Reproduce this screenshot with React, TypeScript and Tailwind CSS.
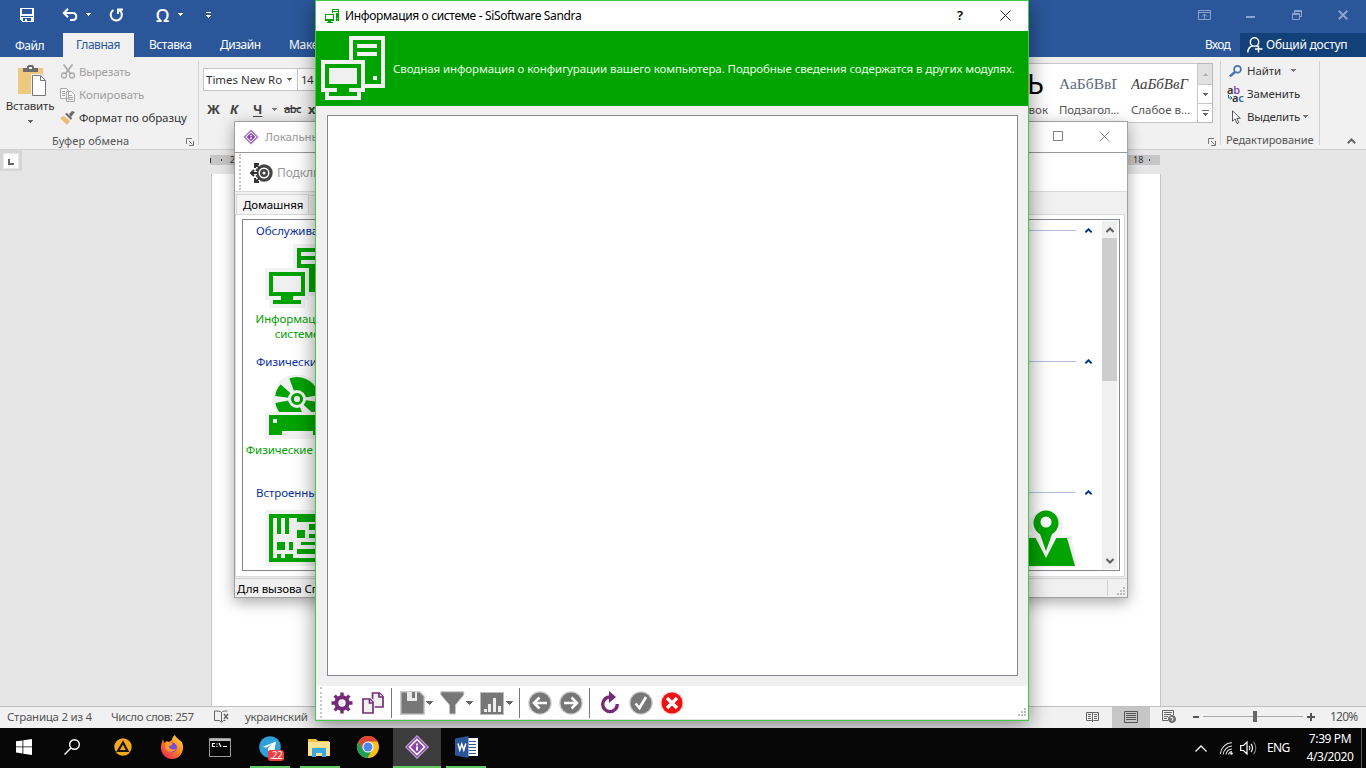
import React from 'react';
import type { ReactNode } from 'react';

function Caret({ className = '' }: { className?: string }) {
  return (
    <svg className={`shrink-0 ${className}`} width="5" height="3" viewBox="0 0 5 3" fill="currentColor" shapeRendering="crispEdges">
      <path d="M0 0h5v1H4v1H3v1H2V2H1V1H0z" />
    </svg>
  );
}

function WideCaret({ className = '' }: { className?: string }) {
  return (
    <svg className={`shrink-0 ${className}`} width="7" height="4" viewBox="0 0 7 4" fill="currentColor" shapeRendering="crispEdges">
      <path d="M0 0h7v1H6v1H5v1H4v1H3V3H2V2H1V1H0z" />
    </svg>
  );
}

function Launcher({ className = '' }: { className?: string }) {
  return (
    <svg className={`shrink-0 ${className}`} width="8" height="8" viewBox="0 0 8 8" stroke="#777" fill="none">
      <path d="M.5 6V.5H6M3 3l3.500 3.500M7.500 3v4.500H3" />
    </svg>
  );
}

function Computers({ size, light, className = '' }: { size: number; light: string; className?: string }) {
  return (
    <svg className={`shrink-0 ${className}`} width={size} height={size} viewBox="0 0 16 16" shapeRendering="crispEdges">
      <path fill={light} d="M7 0h9v13h-5v1h-1v2H1v-2H0V6h7z" />
      <path fill="#00a300" d="M8 1h7v11h-4V6H8z" />
      <path fill={light} d="M9 2h5v1H9zM9 4h5v1H9zM13 10h1v1h-1z" />
      <path fill="#00a300" d="M1 7h9v6H7v1h2v1H2v-1h2v-1H1z" />
      <path fill="#f0f0f0" d="M2 8h7v4H2z" />
    </svg>
  );
}

function SmallComputers() {
  return (
    <svg className="shrink-0" width="16" height="16" viewBox="0 0 16 16" shapeRendering="crispEdges">
      <path fill="#00a300" d="M7 1h7v12h-3V5H7z" />
      <path fill="#fff" d="M8 2h5v1H8zM8 4h5v1H8zM12 10h1v1h-1z" />
      <path fill="#00a300" d="M0 6h9v7H6v1h2v1H2v-1h1v-1H0z" />
      <path fill="#fff" d="M1 7h7v4H1z" />
    </svg>
  );
}

function Diamond({ size, halo }: { size: number; halo: string }) {
  return (
    <svg className="shrink-0" width={size} height={size} viewBox="0 0 24 24">
      <path fill={halo} d="M12 0l12 12-12 12L0 12z" />
      <path fill="#8b44ac" d="M12 1.500L22.500 12 12 22.500 1.500 12z" />
      <path fill="#fff" d="M12 3.300L20.700 12 12 20.700 3.300 12z" />
      <path fill="#8b44ac" d="M12 5.500L18.500 12 12 18.500 5.500 12z" />
      <path fill="#fff" d="M11 8.500h2v2h-2zM11 11.500h2v4h-2z" />
    </svg>
  );
}

function TitleBar() {
  return (
    <div className="flex h-[33px] shrink-0 items-start bg-[#2b579a] text-white">
      <svg className="ml-[20px] mt-[8px]" width="14" height="14" viewBox="0 0 14 14" shapeRendering="crispEdges">
        <path fill="#fff" d="M0 0h14v14H2l-2-2z" />
        <path fill="#2b579a" d="M2 1h10v5H2zM1 8h12v1H1zM3 9h8v4H3z" />
        <path fill="#fff" d="M3 9h8v1H3zM5 11h2v3H5z" />
      </svg>
      <svg className="ml-[28px] mt-[8px]" width="16" height="13" viewBox="0 0 16 13" fill="none" stroke="#fff" strokeWidth="2">
        <path d="M6 .8L1.800 5 6 9.200M2 5h8.500c5 0 5 7 0 7H8" />
      </svg>
      <Caret className="ml-[8px] mt-[13px]" />
      <svg className="ml-[18px] mt-[8px]" width="15" height="14" viewBox="0 0 15 14" fill="none" stroke="#fff" strokeWidth="2">
        <path d="M4.500 2A5.600 5.600 0 1 0 10.500 2.300M9 6V1.400h5" />
      </svg>
      <span className="ml-[32px] mt-[4px] w-[17px] font-['Noto_Sans'] text-[18px] font-medium leading-[22px]">Ω</span>
      <Caret className="ml-[5px] mt-[13px]" />
      <svg className="ml-[23px] mt-[12px]" width="5" height="7" viewBox="0 0 5 7" fill="#fff" shapeRendering="crispEdges">
        <path d="M0 0h5v1H0zM0 3h5v1H4v1H3v1H2V5H1V4H0z" />
      </svg>
      <div className="flex-1" />
      <div className="flex items-start pt-[10px] text-[#8aa4cc]">
        <svg width="13" height="10" viewBox="0 0 13 10" fill="none" stroke="currentColor">
          <path d="M.5.5h12v9H.5zM1 2.500h11M6.500 9V4M4 6.500L6.500 4 9 6.500" />
        </svg>
        <div className="ml-[35px] mt-[6px] h-[2px] w-[9px] bg-[#8aa4cc]" />
        <svg className="ml-[37px]" width="10" height="10" viewBox="0 0 10 10" fill="none" stroke="currentColor">
          <path d="M.5 3.500h7v6h-7zM.5 4.500h7M2.500 3V.5h7v6H8M2.500 1.500h7" />
        </svg>
        <svg className="ml-[36px] mr-[18px]" width="10" height="10" viewBox="0 0 10 10" stroke="currentColor" strokeWidth="2">
          <path d="M.7.7l8.600 8.600M9.300.7L.7 9.300" />
        </svg>
      </div>
    </div>
  );
}

function TabRow() {
  return (
    <div className="flex h-[24px] shrink-0 bg-[#2b579a] text-[12px] leading-[24px] text-white">
      <span className="w-[63px] pl-[15px] pt-px tracking-[-0.5px]">Файл</span>
      <span className="w-[71px] bg-[#f1f1f1] pl-[13px] tracking-[-0.45px] text-[#2b579a]">Главная</span>
      <span className="ml-[15px] w-[71px] tracking-[-0.45px]">Вставка</span>
      <span className="w-[69px] tracking-[-0.5px]">Дизайн</span>
      <span className="tracking-[-0.3px]">Макет</span>
      <div className="flex-1" />
      <span className="w-[35px] tracking-[-0.7px]">Вход</span>
      <div className="flex w-[126px] items-center bg-[#124078] pl-[7px]">
        <svg width="16" height="16" viewBox="0 0 16 16" fill="none" stroke="#fff" strokeWidth="1.4">
          <circle cx="7.500" cy="5" r="4.200" />
          <path d="M.8 15.500c0-4 2-6 5-6.800M9.500 9l1 .8M11.500 8.500v7M8 12h7.500" />
        </svg>
        <span className="ml-[3px] tracking-[-0.25px]">Общий доступ</span>
      </div>
    </div>
  );
}

function ClipboardGroup() {
  return (
    <div className="flex w-[198px] shrink-0 flex-col">
      <div className="flex h-[74px]">
        <div className="flex w-[60px] flex-col items-center">
          <svg className="ml-[4px] mt-[8px]" width="30" height="31" viewBox="0 0 30 31">
            <path fill="#edc87e" d="M1 3h25v26H1z" />
            <path fill="#6b6b6b" d="M6 3h4V1.500L11.500 0h4L17 1.500V3h4v4H6z" />
            <path fill="#f1f1f1" d="M12 2h3v2h-3z" />
            <path fill="#fff" stroke="#f1f1f1" strokeWidth="3" d="M15.500 10.500h8l5 5v15h-13z" />
            <path fill="#fff" stroke="#777" d="M15.500 10.500h8l5 5v15h-13z" />
            <path fill="none" stroke="#777" d="M23.500 10.500v5h5" />
          </svg>
          <span className="mt-px text-[11.500px] leading-[18px] tracking-[-0.2px] text-[#333]">Вставить</span>
          <Caret className="mt-[5px] text-[#666]" />
        </div>
        <div className="flex flex-col pt-[3px] text-[11.500px] leading-[23px] tracking-[-0.08px] text-[#a0a0a0]">
          <div className="flex h-[23px] items-center">
            <svg width="16" height="15" viewBox="0 0 16 15" fill="none" stroke="#a8a8a8" strokeWidth="1.300">
              <circle cx="4" cy="11.500" r="2.500" />
              <circle cx="12" cy="11.500" r="2.500" />
              <path d="M3.500.5l7 9M12.500.5l-7 9" strokeWidth="1.700" />
            </svg>
            <span className="ml-[3px] tracking-[-0.2px]">Вырезать</span>
          </div>
          <div className="flex h-[23px] items-center">
            <svg width="16" height="14" viewBox="0 0 16 14" fill="#f5f5f5" stroke="#a8a8a8">
              <path d="M.5.5h6l2 2v8h-8zM6.500 3.500h5l3 3v7h-8z" />
              <path d="M2 3.500h3M2 5.500h3M2 7.500h3M8 7.500h4M8 9.500h5M8 11.500h5" />
            </svg>
            <span className="ml-[3px]">Копировать</span>
          </div>
          <div className="flex h-[23px] items-center text-[#333]">
            <svg width="16" height="14" viewBox="0 0 16 14">
              <path fill="#e9bd76" d="M0 7l4-2 6 5-3 4z" />
              <path fill="#6b6b6b" d="M5 3l2-1 5 5-1 2zM9 3l3-3 3 1-4 5z" />
            </svg>
            <span className="ml-[3px]">Формат по образцу</span>
          </div>
        </div>
      </div>
      <div className="flex h-[18px] items-center pt-[2px] text-[11px] text-[#555]">
        <span className="ml-[52px] w-[134px] tracking-[0.1px]">Буфер обмена</span>
        <Launcher className="mt-px" />
      </div>
    </div>
  );
}

function FontGroup() {
  return (
    <div className="flex w-[300px] shrink-0 flex-col pt-[4px]">
      <div className="flex h-[84px] flex-col border-l border-[#d2d2d2] pl-[4px] pt-[7px]">
        <div className="flex h-[23px] text-[11.500px] leading-[22px] text-[#333]">
          <div className="flex w-[95px] items-center border border-[#c6c6c6] bg-white pl-[2px]">
            <span className="w-[81px]">Times New Ro</span>
            <Caret className="text-[#666]" />
          </div>
          <div className="-ml-px w-[46px] border border-[#c6c6c6] bg-white pl-[3px] tracking-[-0.5px]">14</div>
        </div>
        <div className="mt-[6px] flex h-[24px] text-[13px] font-bold leading-[24px] text-[#444]">
          <span className="ml-[4px] w-[23px]">Ж</span>
          <span className="w-[23px] italic">К</span>
          <span className="w-[19px] underline underline-offset-2">Ч</span>
          <Caret className="mt-[11px] text-[#777]" />
          <span className="ml-[7px] w-[24px] text-[11px] font-semibold tracking-[-0.7px] line-through">abc</span>
          <span>x₂</span>
        </div>
      </div>
    </div>
  );
}

function StylesGroup() {
  return (
    <div className="flex w-[222px] shrink-0 items-stretch">
      <div className="mt-[6px] flex h-[60px] w-[200px] self-start overflow-hidden border border-[#c6c6c6] bg-white">
        <div className="flex w-[56px] flex-col items-end pr-[11px]">
          <span className="h-[37px] text-[28px] leading-[38px] text-black">Ь</span>
          <span className="mr-[-4px] text-[11.500px] leading-[18px] text-[#555]">Заголовок</span>
        </div>
        <div className="w-[72px] pl-[4px]">
          <div className="h-[37px] w-[58px] overflow-hidden whitespace-nowrap font-['Liberation_Serif'] text-[15.500px] leading-[40px] text-[#5a6a7c]">АаБбВвГг</div>
          <div className="text-[11.500px] leading-[18px] tracking-[-0.15px] text-[#555]">Подзагол...</div>
        </div>
        <div className="w-[66px] pl-[4px]">
          <div className="h-[37px] w-[59px] overflow-hidden whitespace-nowrap font-['Liberation_Serif'] text-[15px] italic leading-[40px] text-[#404040]">АаБбВвГ</div>
          <div className="text-[11.500px] leading-[18px] text-[#555]">Слабое в...</div>
        </div>
      </div>
      <div className="mt-[6px] flex h-[60px] w-[15px] flex-col border border-l-0 border-[#b9b9b9] bg-white text-[#666]">
        <div className="flex h-[20px] items-center justify-center bg-[#e1e1e1] text-[#b5b5b5]"><Caret className="rotate-180" /></div>
        <div className="flex h-[20px] items-center justify-center border-y border-[#c6c6c6]"><Caret /></div>
        <div className="flex flex-1 flex-col items-center justify-center gap-[2px]"><div className="h-px w-[7px] bg-[#666]" /><Caret /></div>
      </div>
      <Launcher className="-ml-[5px] mt-[81px]" />
    </div>
  );
}

function EditingGroup() {
  return (
    <div className="mt-[4px] flex h-[84px] w-[100px] shrink-0 flex-col border-x border-[#d2d2d2] text-[11.500px] leading-[23px] text-[#333]">
      <div className="flex h-[22px] items-center pl-[8px]">
        <svg className="-mt-[2px]" width="13" height="12" viewBox="0 0 13 12" fill="none" stroke="#4476ae" strokeWidth="1.800">
          <circle cx="8.500" cy="4.300" r="3.400" /><path d="M6 7L.8 11.400" strokeWidth="2.500" />
        </svg>
        <span className="-mt-[2px] ml-[5px] w-[44px] tracking-[-0.1px]">Найти</span>
        <Caret className="-mt-[2px] text-[#777]" />
      </div>
      <div className="flex h-[23px] items-center pl-[6px]">
        <div className="flex w-[18px] flex-col text-[11px] font-semibold leading-[8px] tracking-[-0.3px]">
          <span>a<span className="text-[#8b4fb0]">b</span></span>
          <span className="flex items-center whitespace-nowrap pl-[1px]">
            <svg width="4" height="5" viewBox="0 0 4 5" fill="none" stroke="#2f6fb0"><path d="M.5 0v3H4M2.500 1.500L4 3 2.500 4.500" /></svg>
            <span>a<span className="text-[#2f6fb0]">c</span></span>
          </span>
        </div>
        <span className="ml-[2px] tracking-[-0.1px]">Заменить</span>
      </div>
      <div className="flex h-[23px] items-center pl-[11px]">
        <svg width="9" height="14" viewBox="0 0 9 14" fill="#fff" stroke="#555">
          <path d="M.5.8v10.500l2.500-2.500 2 4.700 1.800-.8-2-4.400h3.500z" />
        </svg>
        <span className="ml-[6px] w-[56px] tracking-[-0.25px]">Выделить</span>
        <Caret className="text-[#777]" />
      </div>
      <div className="whitespace-nowrap pl-[5px] pt-[3px] text-[11px] leading-[18px] tracking-[-0.05px] text-[#555]">Редактирование</div>
    </div>
  );
}

function Ribbon() {
  return (
    <div className="flex h-[93px] shrink-0 border-b border-[#d0d0d0] bg-[#f1f1f1]">
      <ClipboardGroup />
      <FontGroup />
      <div className="flex-1" />
      <StylesGroup />
      <EditingGroup />
      <div className="flex w-[46px] items-end justify-center pb-[5px] pl-[17px]">
        <svg width="9" height="6" viewBox="0 0 9 6" fill="none" stroke="#666" strokeWidth="2"><path d="M.8 5.200l3.700-3.700 3.700 3.700" /></svg>
      </div>
    </div>
  );
}

function Workspace() {
  return (
    <div className="flex flex-1 bg-[#e6e6e6]">
      <div className="h-[21px] w-[22px] shrink-0 bg-[#d6d6d6] pl-[3px] pt-[3px]">
        <div className="flex h-[16px] w-[16px] items-end justify-end border border-[#e8e8e8] bg-[#fdfdfd] pb-[3px] pr-[4px]">
          <div className="h-[6px] w-[6px] border-b-2 border-l-2 border-[#666]" />
        </div>
      </div>
      <div className="ml-[188px] flex w-[950px] flex-col pt-[5px]">
        <div className="flex h-[10px] justify-between bg-[#c6c6c6] text-[9px] leading-[10px] text-[#333]">
          <span className="flex items-center">
            <span className="h-[5px] w-px bg-[#333]" /><span className="ml-[10px] h-[2px] w-px bg-[#333]" /><span className="ml-[8px]">2</span>
          </span>
          <span className="mr-[10px] flex items-center"><span className="w-[16px]">18</span><span className="h-[2px] w-px bg-[#333]" /></span>
        </div>
        <div className="-mr-px ml-[1px] mt-[9px] flex-1 border-x border-[#c6c6c6] bg-white" />
      </div>
    </div>
  );
}

function StatusBar() {
  return (
    <div className="flex h-[22px] shrink-0 items-center border-t border-[#c0c0c0] bg-[#f1f1f1] text-[11.500px] text-[#555]">
      <span className="-mt-[2px] ml-[7px] w-[104px] tracking-[-0.25px]">Страница 2 из 4</span>
      <span className="-mt-[2px] w-[103px] tracking-[-0.4px]">Число слов: 257</span>
      <svg className="-mt-[2px]" width="15" height="13" viewBox="0 0 15 13" fill="none" stroke="#666">
        <path d="M7.500 2.500c-1-1.500-4-1.500-7-1.500v9.500h5l2 2 2-2h2M7.500 2.500v9M7.500 2.500c1-1.500 3-1.500 6-1.500" />
        <path d="M10 4l4 5M14 4l-4 5" strokeWidth="1.500" />
      </svg>
      <span className="-mt-[2px] ml-[16px] tracking-[-0.3px]">украинский</span>
      <div className="flex-1" />
      <svg className="-mt-[2px]" width="13" height="12" viewBox="0 0 13 12" fill="none" stroke="#666">
        <path d="M6.500 1.500h-6v8h5l1 1 1-1h5v-8h-6zM6.500 1v10M2 3.500h3M2 5.500h3M2 7.500h3M8 3.500h3M8 5.500h3M8 7.500h3" />
      </svg>
      <div className="ml-[13px] flex h-[21px] w-[38px] items-center justify-center bg-[#c6c6c6]">
        <svg className="-mt-[2px]" width="14" height="12" viewBox="0 0 14 12" fill="none" stroke="#555">
          <path d="M.5.5h13v11H.5zM2 2.500h10M2 4.500h10M2 6.500h10M2 8.500h10" />
        </svg>
      </div>
      <svg className="-mt-[2px] ml-[12px]" width="14" height="13" viewBox="0 0 14 13" fill="none" stroke="#666">
        <path d="M6 10.500H.5V.5h11V5M2 2.500h8M2 4.500h7M2 6.500h4M2 8.500h3" />
        <circle cx="10" cy="9" r="3.500" fill="#777" /><path d="M8 7l3 1-1 3" stroke="#eee" />
      </svg>
      <div className="-mt-[2px] ml-[17px] h-[2px] w-[6px] bg-[#555]" />
      <div className="-mt-[2px] ml-[4px] flex w-[100px] items-center">
        <div className="h-px flex-1 bg-[#aaa]" /><div className="h-[11px] w-[4px] bg-[#666]" /><div className="h-px w-[46px] bg-[#aaa]" />
      </div>
      <svg className="-mt-[2px] ml-[4px]" width="8" height="8" viewBox="0 0 8 8" stroke="#555" strokeWidth="2"><path d="M0 4h8M4 0v8" /></svg>
      <span className="-mt-[2px] ml-[15px] w-[36px] text-[12px] tracking-[-0.8px]">120%</span>
    </div>
  );
}

function Drive() {
  return (
    <svg className="shrink-0" width="64" height="64" viewBox="0 0 64 64">
      <circle cx="32" cy="24" r="24.500" fill="#f2f2f2" /><path fill="#f2f2f2" d="M0 38h64v26H0z" />
      <circle cx="32" cy="24" r="22" fill="#00a300" />
      <path fill="#f2f2f2" d="M32 24L23 0 13 7zM32 24L7 20.500 10 28zM32 24l9 24 10-7zM32 24l25 3.500-3-7.500z" />
      <circle cx="32" cy="24" r="9" fill="#f2f2f2" />
      <circle cx="32" cy="24" r="4.600" fill="none" stroke="#00a300" strokeWidth="3" />
      <path fill="#f2f2f2" d="M0 37h64v4H0z" />
      <path fill="#00a300" d="M4 40h56v20H48v-4H17v4H4z" />
      <path fill="#f2f2f2" d="M8 44h4v4H8z" />
    </svg>
  );
}

function Board() {
  return (
    <svg className="shrink-0" width="64" height="56" viewBox="0 0 64 56" shapeRendering="crispEdges">
      <path fill="#f2f2f2" d="M0 0h64v56H0z" />
      <path fill="#00a300" d="M4 4h56v48H4z" />
      <path fill="#f0f0f0" d="M8 8h48v40H8z" />
      <path fill="#00a300" d="M12 8h4v16h-4zM20 8h4v16h-4zM32 8h24v4H32zM44 14h12v6H44zM32 20h8v8h-8zM44 24h12v4H44zM12 32h8v8h-8zM24 32h4v8h-4zM36 32h20v3H36zM32 39h24v5H32zM12 44h4v4h-4zM20 44h8v4h-8z" />
    </svg>
  );
}

function MapPin() {
  return (
    <svg className="shrink-0" width="64" height="64" viewBox="0 0 64 64">
      <path fill="#f2f2f2" d="M8 29h12a16.500 16.500 0 1 1 28 0h10l9 32H-1z" />
      <path fill="#00a300" d="M9 32h46l8 28H1z" />
      <path fill="#f2f2f2" d="M20 25l14 27 14-27z" />
      <path fill="#00a300" d="M34 45l-6-17a12.500 12.500 0 1 1 12 0z" />
      <circle cx="34" cy="16" r="5.500" fill="#fff" />
    </svg>
  );
}

function Category({ title, label, icon, extra }: { title: string; label: ReactNode; icon: ReactNode; extra?: ReactNode }) {
  return (
    <section className="h-[131px] shrink-0">
      <div className="flex h-[20px] items-center pl-[13px] text-[11.500px] tracking-[-0.05px] text-[#0a2fa0]">
        <span className="shrink-0">{title}</span>
        <div className="mb-[2px] ml-[6px] mr-[9px] h-px flex-1 bg-[#b4bee0]" />
        <svg className="mb-px mr-[10px]" width="7" height="5" viewBox="0 0 7 5" fill="none" stroke="#003399" strokeWidth="2"><path d="M.3 4.300l3.200-3 3.200 3" /></svg>
      </div>
      <div className="flex">
        <div className="flex w-[108px] flex-col items-center pt-[4px]">
          <div className="flex h-[66px] items-start">{icon}</div>
          <div className="whitespace-nowrap text-center text-[11.500px] leading-[15px] tracking-[-0.08px] text-[#00a300]">{label}</div>
        </div>
        <div className="ml-[652px] mt-[3px]">{extra}</div>
      </div>
    </section>
  );
}

function Grip() {
  return (
    <svg className="shrink-0" width="8" height="8" viewBox="0 0 8 8" fill="#bdbdbd" shapeRendering="crispEdges">
      <path d="M6 0h2v2H6zM3 3h2v2H3zM6 3h2v2H6zM0 6h2v2H0zM3 6h2v2H3zM6 6h2v2H6z" />
    </svg>
  );
}

function SandraWindow() {
  return (
    <div className="absolute left-[234px] top-[121px] flex h-[477px] w-[894px] flex-col border border-[#a0a0a0] bg-[#f0f0f0] text-[11.500px] shadow-[0_4px_14px_rgba(0,0,0,0.35)]">
      <div className="flex h-[31px] shrink-0 items-center border-b border-[#999] bg-white pl-[8px] text-[#999]">
        <Diamond size={16} halo="#dfcbe8" />
        <span className="ml-[6px] tracking-[-0.1px]">Локальный компьютер</span>
        <div className="flex-1" />
        <div className="mb-[2px] h-[10px] w-[10px] border border-[#888]" />
        <svg className="mb-px ml-[36px] mr-[17px]" width="11" height="11" viewBox="0 0 11 11" stroke="#888"><path d="M.5.5l10 10M10.500.5l-10 10" /></svg>
      </div>
      <div className="flex h-[39px] shrink-0 items-center border-b border-[#d9d9d9] bg-white text-[#999]">
        <div className="ml-[4px] h-[36px] border-l-2 border-dotted border-[#c6c6c6]" />
        <svg className="ml-[8px] mt-[2px]" width="25" height="24" viewBox="0 0 25 24">
          <circle cx="15" cy="12" r="8.700" fill="#444" /><circle cx="15" cy="12" r="5.500" fill="#fff" /><circle cx="15" cy="12" r="4" fill="#444" /><circle cx="15" cy="12" r="1.500" fill="#fff" />
          <path d="M1 12h7M4 9l-3 3 3 3M6 7V2h5M7 3l3 3M6 17v5h5M7 21l3-3" fill="none" stroke="#fff" strokeWidth="4" />
          <path d="M1.500 12H9M5 9l-3 3 3 3M6 7V3h4M7 4l4 3M6 17v4h4M7 20l4-3" fill="none" stroke="#333" strokeWidth="2" />
        </svg>
        <span className="ml-[3px] pt-[2px] text-[12px] tracking-[-0.1px]">Подключение</span>
      </div>
      <div className="flex h-[22px] shrink-0 items-end pl-[1px]">
        <div className="h-[20px] w-[73px] border border-b-0 border-[#d9d9d9] bg-[#f5f5f5] pl-[6px] leading-[19px] tracking-[-0.1px] text-black">Домашняя</div>
        <div className="h-[19px] w-[70px] border border-b-0 border-l-0 border-[#d9d9d9]" />
      </div>
      <div className="mr-[2px] flex h-[363px] shrink-0 border border-[#d9d9d9] bg-white pl-[6px] pt-[4px]">
        <div className="flex h-[352px] w-[878px] border border-[#828790] bg-white">
          <div className="flex flex-1 flex-col overflow-hidden pt-px">
            <Category title="Обслуживание" label={<>Информация о<br />системе</>} icon={<Computers size={64} light="#f2f2f2" className="-mt-px" />} />
            <Category title="Физические устройства" label="Физические диски" icon={<div className="-mt-px"><Drive /></div>} />
            <Category title="Встроенные устройства" label="" icon={<div className="pt-[3px]"><Board /></div>} extra={<div className="ml-[9px]"><MapPin /></div>} />
          </div>
          <div className="mr-[2px] mt-px flex h-[348px] w-[15px] flex-col bg-[#f0f0f0]">
            <div className="flex h-[17px] items-center justify-center"><svg width="8" height="6" viewBox="0 0 8 6" fill="none" stroke="#606060" strokeWidth="2"><path d="M.5 5L4 1.500 7.500 5" /></svg></div>
            <div className="h-[143px] bg-[#cdcdcd]" />
            <div className="flex flex-1 items-end justify-center pb-[5px]"><svg width="8" height="6" viewBox="0 0 8 6" fill="none" stroke="#606060" strokeWidth="2"><path d="M.5 1L4 4.500 7.500 1" /></svg></div>
          </div>
        </div>
      </div>
      <div className="mt-px flex flex-1 items-center border-t border-[#d0d0d0] pl-[2px] text-black">
        <span className="pt-px tracking-[-0.1px]">Для вызова Справки нажмите F1</span>
        <div className="flex-1" />
        <div className="mr-[9px] h-[16px] w-px bg-[#d0d0d0]" />
        <div className="mr-[2px] mt-[6px]"><Grip /></div>
      </div>
    </div>
  );
}

function Round({ children, fill = '#777' }: { children: ReactNode; fill?: string }) {
  return (
    <svg className="shrink-0" width="24" height="24" viewBox="0 0 24 24" fill="none" stroke="#fff" strokeWidth="2.600">
      <circle cx="12" cy="12" r="11.800" fill={fill === '#777' ? '#ccc' : '#f6d5d5'} stroke="none" />
      <circle cx="12" cy="12" r="10.500" fill={fill} stroke="none" />
      {children}
    </svg>
  );
}

function DialogToolbar() {
  return (
    <div className="flex h-[33px] shrink-0 items-center bg-white text-[#666]">
      <div className="ml-[4px] h-[31px] border-l-2 border-dotted border-[#c6c6c6]" />
      <svg className="ml-[8px]" width="24" height="24" viewBox="0 0 24 24" fill="none" stroke="#762b78">
        <path strokeWidth="3.400" d="M12 1.500v4M12 18.500v4M1.500 12h4M18.500 12h4M4.600 4.600l3 3M16.400 16.400l3 3M4.600 19.400l3-3M16.400 7.600l3-3" />
        <circle cx="12" cy="12" r="5.700" strokeWidth="4" />
        <circle cx="12" cy="12" r="2" fill="#f0e8f2" stroke="none" />
      </svg>
      <svg className="ml-[7px]" width="24" height="24" viewBox="0 0 24 24" fill="#f0f0f0" stroke="#762b78" strokeWidth="1.700">
        <path d="M11.500 2h7l3.500 3.500V16H11.500z" /><path d="M18 2v4h4" /><path stroke="#fff" strokeWidth="3.500" d="M2 8h7l3 3v11H2z" /><path d="M2 8h7l3 3v11H2z" /><path d="M8.500 8v4H12" />
      </svg>
      <div className="ml-[6px] h-[30px] w-px bg-[#777]" />
      <svg className="ml-[8px]" width="25" height="24" viewBox="0 0 25 24">
        <path fill="#ccc" d="M0 0h20l5 5v19H0z" /><path fill="#777" d="M1.500 1.500h18l4 4v17h-22z" /><path fill="#e9e9e9" d="M7 1h10v9H7z" /><path fill="#777" d="M12 1h3v6h-3z" />
      </svg>
      <WideCaret className="ml-[1px]" />
      <svg className="ml-[7px]" width="25" height="24" viewBox="0 0 25 24"><path fill="#777" stroke="#c6c6c6" d="M.8.8h23v3L15.500 14v9h-6v-9L.8 3.800z" /></svg>
      <WideCaret className="ml-[1px]" />
      <svg className="ml-[7px]" width="24" height="24" viewBox="0 0 24 24"><path fill="#777" stroke="#bbb" d="M.5 1.500h23v22H.5z" /><path fill="#eee" d="M4 18h3v3H4zM8 13h3v8H8zM13 7h3v14h-3zM18 15h3v6h-3z" /></svg>
      <WideCaret className="ml-[2px]" />
      <div className="ml-[6px] h-[30px] w-px bg-[#777]" />
      <div className="ml-[8px] flex gap-[7px]">
        <Round><path d="M19 12H7M11.500 6.500L6 12l5.500 5.500" /></Round>
        <Round><path d="M5 12h12M12.500 6.500L18 12l-5.500 5.500" /></Round>
      </div>
      <div className="ml-[6px] h-[30px] w-px bg-[#777]" />
      <svg className="ml-[8px]" width="24" height="24" viewBox="0 0 24 24"><path fill="none" stroke="#762b78" strokeWidth="3.400" d="M12.500 6A7.300 7.300 0 1 0 19.300 13" /><path fill="#762b78" d="M11 0l7 6-7 6z" /></svg>
      <div className="ml-[7px] flex gap-[7px]">
        <Round><path d="M6.500 12.500l4 4.500 6.500-11" /></Round>
        <Round fill="#ee1111"><path d="M7 7l10 10M17 7L7 17" strokeWidth="3.400" /></Round>
      </div>
      <div className="flex-1" />
      <div className="mr-[2px] self-end pb-[3px]"><Grip /></div>
    </div>
  );
}

function InfoDialog() {
  return (
    <div className="absolute left-[315px] top-0 flex h-[721px] w-[714px] flex-col border border-[#44c944] bg-[#f0f0f0] text-[12px] shadow-[0_5px_20px_rgba(0,0,0,0.45)]">
      <div className="flex h-[30px] shrink-0 items-center bg-white pl-[9px] text-black">
        <SmallComputers />
        <span className="ml-[4px] whitespace-nowrap tracking-[-0.35px]">Информация о системе - SiSoftware Sandra</span>
        <div className="flex-1" />
        <span className="text-[13px] font-semibold">?</span>
        <svg className="mb-px ml-[37px] mr-[17px]" width="11" height="11" viewBox="0 0 11 11" stroke="#222"><path d="M.5.5l10 10M10.500.5l-10 10" /></svg>
      </div>
      <div className="flex h-[75px] shrink-0 items-center bg-[#00a300] pl-[5px] text-[#e8ffe8]">
        <Computers size={64} light="#f2f2f2" className="-mt-px" />
        <span className="ml-[8px] mt-px whitespace-nowrap text-[11.500px] tracking-[-0.085px]">Сводная информация о конфигурации вашего компьютера. Подробные сведения содержатся в других модулях.</span>
      </div>
      <div className="ml-[11px] mt-[9px] h-[561px] w-[691px] shrink-0 border border-[#828790] bg-white" />
      <div className="flex-1" />
      <DialogToolbar />
      <div className="h-px shrink-0 bg-[#e3dfe6]" />
    </div>
  );
}

function Slot({ children, active = false, open = false, narrow = false }: { children: ReactNode; active?: boolean; open?: boolean; narrow?: boolean }) {
  return (
    <div className={`flex h-full shrink-0 flex-col items-center ${active ? 'w-[48px] bg-[#3c3c3c]' : narrow ? 'w-[50px] bg-[#060606]' : 'w-[49px]'}`}>
      <div className="flex h-[38px] items-center">{children}</div>
      {open && <div className={`h-[2px] bg-[#62c962] ${active ? 'w-[48px]' : 'w-[40px]'}`} />}
    </div>
  );
}

function Taskbar() {
  return (
    <div className="flex h-[40px] shrink-0 bg-[#060606] text-[12px] text-white">
      <Slot><svg className="-ml-px" width="16" height="16" viewBox="0 0 16 16" fill="#fff"><path d="M0 2.300L6.500 1.400v6.100H0zM7.300 1.300L16 0v7.500H7.300zM0 8.300h6.500v6.200L0 13.600zM7.300 8.300H16V16l-8.700-1.300z" /></svg></Slot>
      <Slot><svg className="mr-[3px]" width="16" height="16" viewBox="0 0 16 16" fill="none" stroke="#fff" strokeWidth="1.400"><circle cx="10.500" cy="5.500" r="4.800" /><path d="M7 9L.5 15.500" /></svg></Slot>
      <Slot><svg width="18" height="18" viewBox="0 0 18 18"><circle cx="9" cy="9" r="8.700" fill="#f5a81c" /><path d="M9 4.500L4 13h9.500z" fill="none" stroke="#171717" strokeWidth="2.200" /></svg></Slot>
      <Slot>
        <svg width="24" height="24" viewBox="0 0 24 24">
          <defs><linearGradient id="fox" x1="1" y1="0" x2="0.200" y2="1"><stop offset="0" stopColor="#ffe24a" /><stop offset="0.500" stopColor="#ff8a1e" /><stop offset="1" stopColor="#f0245c" /></linearGradient></defs>
          <path fill="url(#fox)" d="M3 4l1 4 3-2 2 1 3-2c0-2 1-4 3-5 1 3 3 3 4 5l2 1c2 2 2 5 2 7a11 11 0 0 1-22 0c0-4 1-6 2-9z" />
          <circle cx="12" cy="12.500" r="5" fill="#7750d8" /><path fill="#ff9a28" d="M5 8c3-2 5 0 7 0 1 1-1 3-3 3 0 4 4 4 7 3-2 4-10 4-11-2z" />
        </svg>
      </Slot>
      <Slot>
        <svg className="mr-[2px]" width="22" height="19" viewBox="0 0 22 19"><path fill="#050505" stroke="#9a9a9a" d="M.5.5h21v18H.5z" /><path fill="#bbb" d="M1 1h20v2H1z" /><path fill="none" stroke="#fff" strokeWidth="1.200" d="M6 5.500H3.500v3H6M8 5.500v1M8 8v1M10 5l2 4M14 8.500h4" /></svg>
      </Slot>
      <Slot narrow open>
        <div className="relative h-[22px] w-[22px]">
          <svg width="22" height="22" viewBox="0 0 22 22"><circle cx="11" cy="11" r="10.800" fill="#2f9fd8" /><path fill="#fff" d="M3.500 11L17 5.500 15 16.500l-4-3-2 2v-3.500l5-4.500-6.500 4z" /></svg>
          <span className="absolute left-[9px] top-[14px] h-[11px] w-[16px] rounded-[3px] bg-[#f03c3c] text-center text-[10px] leading-[11px] tracking-[-0.5px]">.22</span>
        </div>
      </Slot>
      <Slot open>
        <svg className="mr-[2px]" width="22" height="19" viewBox="0 0 22 19"><path fill="#f5c243" d="M0 1h8l2 2h11v15H0z" /><path fill="#ffe394" d="M0 4h22v14H0z" /><path fill="#38a9e4" d="M4 10h14v9h-4v-4H8v4H4z" /></svg>
      </Slot>
      <Slot>
        <svg className="mr-[2px]" width="22" height="22" viewBox="0 0 22 22"><circle cx="11" cy="11" r="11" fill="#fbc116" /><path fill="#dc4437" d="M1.500 5.500A11 11 0 0 1 20.500 5.500H11L6.200 13.700z" /><path fill="#1f9d58" d="M1.500 5.500A11 11 0 0 0 10.500 22l4.800-8.300H6.200z" /><circle cx="11" cy="11" r="5.600" fill="#fff" /><circle cx="11" cy="11" r="4.500" fill="#4a88f0" /></svg>
      </Slot>
      <Slot active open><Diamond size={24} halo="#c9a3dc" /></Slot>
      <Slot narrow open>
        <svg width="23" height="22" viewBox="0 0 23 22"><path fill="#fff" d="M12 2h11v18H12z" /><path stroke="#2b579a" d="M14 5.500h7M14 8.500h7M14 11.500h7M14 14.500h7M14 17.500h7" /><path fill="#2b579a" d="M0 2.500L13.500 0v22L0 19.500z" /><path fill="none" stroke="#fff" strokeWidth="1.500" d="M3 7.500L4.800 14 6.800 8l2 6L10.800 7.500" /></svg>
      </Slot>
      <div className="flex-1" />
      <div className="flex items-center">
        <svg width="12" height="7" viewBox="0 0 12 7" fill="none" stroke="#fff" strokeWidth="1.300"><path d="M.5 6.500L6 1l5.500 5.500" /></svg>
        <svg className="ml-[13px]" width="13" height="13" viewBox="0 0 13 13" fill="none" stroke="#ddd" strokeWidth="1.100"><path d="M.5 12A11.500 11.500 0 0 1 12 .8M3.200 12.500A9 9 0 0 1 12 4M6 12.500A6.500 6.500 0 0 1 12 7M8.500 12.500A4 4 0 0 1 12 9.500" /><circle cx="11.500" cy="11.500" r="1.200" fill="#fff" stroke="none" /></svg>
        <svg className="ml-[7px]" width="17" height="14" viewBox="0 0 17 14" fill="none" stroke="#fff" strokeWidth="1.200"><path d="M.7 4.500h2.800L7 1v12L3.500 9.500H.7zM9 5c1 1 1 3 0 4M11 3c2 2 2 6 0 8" /><path stroke="#777" d="M13.500 1c3 3 3 9 0 12" /></svg>
        <span className="ml-[10px] w-[26px] tracking-[-0.6px]">ENG</span>
      </div>
      <div className="ml-[7px] flex w-[60px] flex-col items-center pt-[2px] leading-[18px]">
        <span className="tracking-[-0.4px]">7:39 PM</span>
        <span className="tracking-[-0.4px]">4/3/2020</span>
      </div>
      <div className="ml-[1px] mr-[4px] w-px bg-[#555]" />
    </div>
  );
}

export default function App() {
  return (
    <div className="relative flex h-[768px] w-[1366px] flex-col overflow-hidden bg-[#e6e6e6] font-['Noto_Sans',sans-serif]">
      <div className="relative flex h-[728px] shrink-0 flex-col overflow-hidden">
        <TitleBar />
        <TabRow />
        <Ribbon />
        <Workspace />
        <StatusBar />
        <SandraWindow />
        <InfoDialog />
      </div>
      <Taskbar />
    </div>
  );
}
